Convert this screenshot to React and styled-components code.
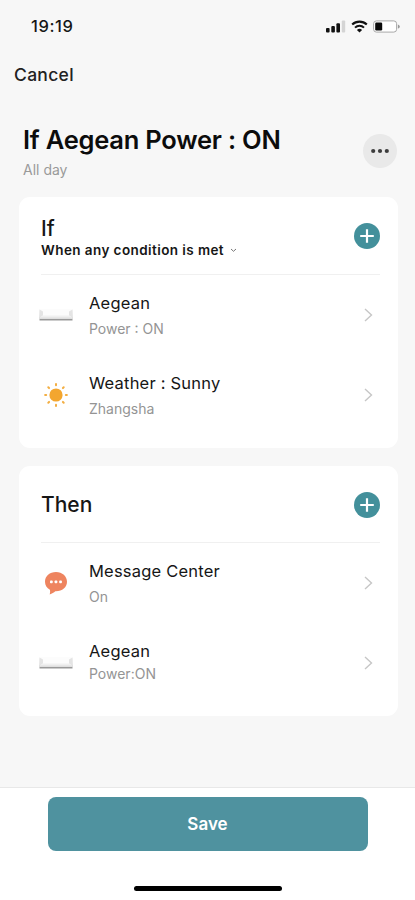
import React from "react";
import styled, { createGlobalStyle } from "styled-components";

const conditions = [
  { id: 1, icon: "device", title: "Aegean", detail: "Power : ON" },
  { id: 2, icon: "sun", title: "Weather : Sunny", detail: "Zhangsha" },
];

const actions = [
  { id: 1, icon: "message", title: "Message Center", detail: "On" },
  { id: 2, icon: "device", title: "Aegean", detail: "Power:ON", tight: true },
];

const SignalIcon = () => (
  <svg width="20" height="13" viewBox="0 0 20 13">
    <rect x="0" y="8" width="3.6" height="4.6" rx="1" fill="#111" />
    <rect x="5.3" y="6" width="3.6" height="6.6" rx="1" fill="#111" />
    <rect x="10.4" y="3.2" width="3.6" height="9.4" rx="1" fill="#111" />
    <rect x="15.8" y="0.4" width="3.4" height="12.2" rx="1" fill="#d4d4d4" />
  </svg>
);

const WifiIcon = () => (
  <svg width="17" height="13" viewBox="0 0 17 13" fill="none" stroke="#111">
    <path d="M1.2 4.6a10.4 10.4 0 0 1 14.6 0" strokeWidth="2.1" />
    <path d="M4 7.6a6.4 6.4 0 0 1 9 0" strokeWidth="2" />
    <path d="M8.5 12.4 5.9 9.9a3.8 3.8 0 0 1 5.2 0z" fill="#111" stroke="none" />
  </svg>
);

const BatteryIcon = () => (
  <svg width="27" height="13" viewBox="0 0 27 13">
    <rect x="0.6" y="0.9" width="23" height="11.2" rx="2.8" fill="#fff" stroke="#a9a9a9" />
    <rect x="2.2" y="2.5" width="7" height="8" rx="1.2" fill="#0a0a0a" />
    <path d="M24.9 4.4c1.3.5 1.9 1.2 1.9 2.1s-.6 1.6-1.9 2.1z" fill="#999" />
  </svg>
);

const PlusIcon = () => (
  <svg width="26" height="26" viewBox="0 0 26 26">
    <circle cx="13" cy="13" r="13" fill="#43909b" />
    <path d="M13 6.2v13.6M6.2 13h13.6" stroke="#fff" strokeWidth="2.2" />
  </svg>
);

const DeviceIcon = () => (
  <svg width="36" height="14" viewBox="0 0 36 14">
    <path d="M1.5 1h33l.5 10H1z" fill="#fcfcfc" />
    <path d="M1.5 1.5 5 3.5v4L1 10.500zM34.500 1.500 31 3.500v4l4 3z" fill="#e4e4e4" />
    <path d="M4.500 7.500h27l3 2.700h-33z" fill="#f0f0f0" />
    <path d="M1 10.200h34" stroke="#d4d4d4" strokeWidth="1" />
    <path d="M1.500 11.700h33" stroke="#999" strokeWidth="1.500" />
  </svg>
);

const SunIcon = () => (
  <svg width="26" height="26" viewBox="0 0 26 26">
    <circle cx="13" cy="13" r="6.600" fill="#f3a62f" />
    {[0, 45, 90, 135, 180, 225, 270, 315].map((angle) => (
      <path
        key={angle}
        d="M13 2.100v1.100"
        stroke="#f3ae42"
        strokeWidth="2"
        strokeLinecap="round"
        transform={`rotate(${angle} 13 13)`}
      />
    ))}
  </svg>
);

const MessageIcon = () => (
  <svg width="24" height="24" viewBox="0 0 24 24">
    <path
      d="M12 1C5.700 1 1 5.200 1 10.700c0 3.500 1.900 6.400 4.900 8 .4 1.500.2 3-.2 4.700 2.300-.7 4.200-1.800 5.600-3.200h.7c6.300 0 11-4.100 11-9.500S18.300 1 12 1z"
      fill="#ee845f"
    />
    <rect x="6" y="9.500" width="2.700" height="2.700" rx="0.800" fill="#fff" />
    <rect x="10.600" y="9.500" width="2.700" height="2.700" rx="0.800" fill="#fff" />
    <rect x="15.200" y="9.500" width="2.700" height="2.700" rx="0.800" fill="#fff" />
  </svg>
);

const icons = {
  device: <DeviceIcon />,
  sun: <SunIcon />,
  message: <MessageIcon />,
};

const RuleItem = (props) => {
  return (
    <Row>
      <IconSlot>{icons[props.icon]}</IconSlot>
      <RowText>
        <RowTitle>{props.title}</RowTitle>
        <RowDetail $tight={props.tight}>{props.detail}</RowDetail>
      </RowText>
      <svg width="9" height="14" viewBox="0 0 9 14" fill="none">
        <path d="M1 1l6.500 6L1 13" stroke="#c6c6c6" strokeWidth="1.400" />
      </svg>
    </Row>
  );
};

const App = () => {
  return (
    <>
      <GlobalStyle />
      <Screen>
        <StatusBar>
          <Time>19:19</Time>
          <StatusIcons>
            <SignalIcon />
            <WifiIcon />
            <BatteryIcon />
          </StatusIcons>
        </StatusBar>
        <NavBar>
          <CancelButton>Cancel</CancelButton>
        </NavBar>
        <Heading>
          <div>
            <Title>If Aegean Power : ON</Title>
            <Period>All day</Period>
          </div>
          <MoreButton aria-label="More">
            <svg width="20" height="6" viewBox="0 0 20 6" fill="#3c3c3c">
              <circle cx="3.200" cy="3" r="2.100" />
              <circle cx="10" cy="3" r="2.100" />
              <circle cx="16.800" cy="3" r="2.100" />
            </svg>
          </MoreButton>
        </Heading>
        <Cards>
          <Card>
            <CardHeader $height={78}>
              <HeaderText>
                <CardTitle>If</CardTitle>
                <Mode>
                  When any condition is met
                  <svg width="7" height="5" viewBox="0 0 7 5" fill="none">
                    <path d="M1 1l2.500 2.300L6 1" stroke="#777" />
                  </svg>
                </Mode>
              </HeaderText>
              <AddButton aria-label="Add condition">
                <PlusIcon />
              </AddButton>
            </CardHeader>
            {conditions.map((item) => (
              <RuleItem key={item.id} {...item} />
            ))}
          </Card>
          <Card>
            <CardHeader $height={77} $top={2}>
              <CardTitle>Then</CardTitle>
              <AddButton aria-label="Add action">
                <PlusIcon />
              </AddButton>
            </CardHeader>
            {actions.map((item) => (
              <RuleItem key={item.id} {...item} />
            ))}
          </Card>
        </Cards>
        <Footer>
          <SaveButton>Save</SaveButton>
          <HomeIndicator />
        </Footer>
      </Screen>
    </>
  );
};

export default App;

const GlobalStyle = createGlobalStyle`
  * {
    box-sizing: border-box;
  }
  body {
    margin: 0;
    font-family: Inter, "Liberation Sans", sans-serif;
    color: #161616;
  }
  button {
    padding: 0;
    border: none;
    background: none;
    font-family: inherit;
    color: inherit;
    cursor: pointer;
  }
  svg {
    display: block;
    flex-shrink: 0;
  }
`;

const Screen = styled.div`
  display: flex;
  flex-direction: column;
  width: 415px;
  height: 900px;
  background: #f7f7f7;
  white-space: nowrap;
  overflow: hidden;
`;

const StatusBar = styled.div`
  display: flex;
  justify-content: space-between;
  align-items: center;
  height: 52px;
  padding: 0 15px 0 31px;
`;

const Time = styled.div`
  font-size: 16.5px;
  font-weight: 500;
  letter-spacing: 0.6px;
`;

const StatusIcons = styled.div`
  display: flex;
  align-items: center;
  gap: 5px;
`;

const NavBar = styled.div`
  display: flex;
  align-items: center;
  height: 46px;
  padding: 0 14px 2px;
`;

const CancelButton = styled.button`
  font-size: 17.5px;
  font-weight: 500;
  letter-spacing: 0.3px;
  color: #222;
`;

const Heading = styled.div`
  display: flex;
  justify-content: space-between;
  height: 99px;
  padding: 26px 18px 0 23px;
`;

const Title = styled.h1`
  margin: 0;
  font-size: 25.5px;
  font-weight: 600;
  letter-spacing: -0.23px;
  line-height: 32px;
  color: #0c0c0c;
`;

const Period = styled.div`
  margin-top: 4px;
  font-size: 14px;
  line-height: 20px;
  color: #9a9a9a;
`;

const MoreButton = styled.button`
  display: flex;
  justify-content: center;
  align-items: center;
  width: 34px;
  height: 34px;
  margin-top: 10px;
  border-radius: 50%;
  background: #e9e9e9;
`;

const Cards = styled.div`
  display: flex;
  flex: 1;
  flex-direction: column;
  gap: 18px;
  padding: 0 17px 0 19px;
`;

const Card = styled.section`
  padding: 0 18px 13px 22px;
  border-radius: 11px;
  background: #fff;
`;

const CardHeader = styled.div`
  display: flex;
  justify-content: space-between;
  align-items: center;
  height: ${(props) => props.$height}px;
  padding-top: ${(props) => props.$top || 0}px;
  border-bottom: 1px solid #f0f0f0;
`;

const HeaderText = styled.div`
  padding-top: 5px;
`;

const CardTitle = styled.h2`
  margin: 0;
  font-size: 21px;
  font-weight: 500;
  line-height: 24px;
`;

const Mode = styled.div`
  display: flex;
  align-items: center;
  gap: 6px;
  font-size: 13.5px;
  font-weight: 600;
  letter-spacing: 0.42px;
  line-height: 18px;
`;

const AddButton = styled.button`
  width: 26px;
  height: 26px;
`;

const Row = styled.div`
  display: flex;
  align-items: center;
  height: 80px;
  padding-right: 7px;
`;

const IconSlot = styled.div`
  display: flex;
  justify-content: center;
  width: 36px;
  margin: 0 15px 0 -3px;
`;

const RowText = styled.div`
  flex: 1;
  align-self: flex-start;
  padding-top: 18px;
`;

const RowTitle = styled.div`
  font-size: 16.5px;
  letter-spacing: 0.2px;
  line-height: 20px;
`;

const RowDetail = styled.div`
  margin-top: ${(props) => (props.$tight ? 3 : 6)}px;
  font-size: 14px;
  line-height: 20px;
  color: #949494;
`;

const Footer = styled.footer`
  display: flex;
  flex-direction: column;
  align-items: center;
  height: 113px;
  padding-top: 9px;
  border-top: 1px solid #e8e8e8;
  background: #fff;
`;

const SaveButton = styled.button`
  width: 320px;
  height: 54px;
  border-radius: 8px;
  background: #4f929f;
  font-size: 17px;
  font-weight: 600;
  color: #fff;
`;

const HomeIndicator = styled.div`
  width: 148px;
  height: 5px;
  margin-top: 35px;
  border-radius: 3px;
  background: #000;
`;
